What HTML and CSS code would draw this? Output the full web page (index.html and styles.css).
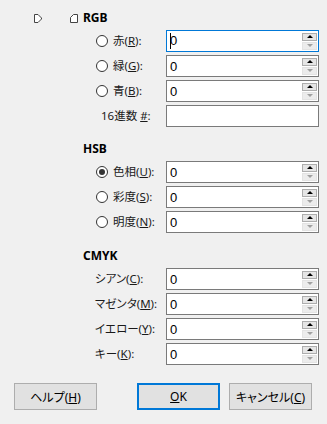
FILE: index.html
```html
<!DOCTYPE html>
<html lang="ja">
<head>
    <meta charset="UTF-8">
    <title>色の選択</title>
    <link rel="stylesheet" href="styles.css">
</head>
<body>
    <div class="dialog">
        <div class="top">
            <svg class="marker m1" width="8" height="9" viewBox="0 0 8 9"><path d="M0.5 0.5 H4 L7.5 4 V5 L4 8.5 H0.5 Z" fill="#fff" stroke="#444"/></svg>
            <svg class="marker m2" width="8" height="9" viewBox="0 0 8 9"><path d="M7.5 0.5 H3.5 L0.5 3.5 V8.5 H7.5 Z" fill="#fff" stroke="#444"/></svg>
            <h3 class="head">RGB</h3>
        </div>

        <div class="row">
            <label class="lbl radio"><span class="dot"></span>赤(<u>R</u>):</label>
            <div class="field focus"><span class="val"><span class="caret"></span>0</span><div class="spin"><span class="up"></span><span class="down"></span></div></div>
        </div>
        <div class="row">
            <label class="lbl radio"><span class="dot"></span>緑(<u>G</u>):</label>
            <div class="field"><span class="val">0</span><div class="spin"><span class="up"></span><span class="down"></span></div></div>
        </div>
        <div class="row">
            <label class="lbl radio"><span class="dot"></span>青(<u>B</u>):</label>
            <div class="field"><span class="val">0</span><div class="spin"><span class="up"></span><span class="down"></span></div></div>
        </div>
        <div class="row">
            <label class="lbl hex"><span>16進数 <u>#</u>:</span></label>
            <div class="field"><span class="val"></span></div>
        </div>

        <h3 class="head sec-hsb">HSB</h3>
        <div class="row">
            <label class="lbl radio"><span class="dot on"></span>色相(<u>U</u>):</label>
            <div class="field"><span class="val">0</span><div class="spin"><span class="up"></span><span class="down"></span></div></div>
        </div>
        <div class="row">
            <label class="lbl radio"><span class="dot"></span>彩度(<u>S</u>):</label>
            <div class="field"><span class="val">0</span><div class="spin"><span class="up"></span><span class="down"></span></div></div>
        </div>
        <div class="row">
            <label class="lbl radio"><span class="dot"></span>明度(<u>N</u>):</label>
            <div class="field"><span class="val">0</span><div class="spin"><span class="up"></span><span class="down"></span></div></div>
        </div>

        <h3 class="head sec-cmyk">CMYK</h3>
        <div class="row">
            <label class="lbl plain"><span>シアン(<u>C</u>):</span></label>
            <div class="field"><span class="val">0</span><div class="spin"><span class="up"></span><span class="down"></span></div></div>
        </div>
        <div class="row">
            <label class="lbl plain"><span>マゼンタ(<u>M</u>):</span></label>
            <div class="field"><span class="val">0</span><div class="spin"><span class="up"></span><span class="down"></span></div></div>
        </div>
        <div class="row">
            <label class="lbl plain"><span>イエロー(<u>Y</u>):</span></label>
            <div class="field"><span class="val">0</span><div class="spin"><span class="up"></span><span class="down"></span></div></div>
        </div>
        <div class="row">
            <label class="lbl plain"><span>キー(<u>K</u>):</span></label>
            <div class="field"><span class="val">0</span><div class="spin"><span class="up"></span><span class="down"></span></div></div>
        </div>

        <div class="buttons">
            <button class="btn">ヘルプ(<u>H</u>)</button>
            <span class="fill"></span>
            <button class="btn default"><u>O</u>K</button>
            <button class="btn">キャンセル(<u>C</u>)</button>
        </div>
    </div>
</body>
</html>
```

FILE: styles.css
```css
html, body {
    margin: 0;
    padding: 0;
    background: #f0f0f0;
}
.dialog {
    width: 327px;
    height: 424px;
    font-family: "Noto Sans", "Noto Sans CJK JP", sans-serif;
    font-feature-settings: "palt";
    font-size: 12px;
    color: #1a1a1a;
    padding-top: 10px;
    box-sizing: border-box;
}
.top {
    display: flex;
    align-items: center;
    height: 16px;
    margin-bottom: 4px;
}
.marker {
    display: block;
}
.m1 {
    margin-left: 34px;
}
.m2 {
    margin-left: 28px;
}
.head {
    margin: 0;
    font-size: 12px;
    font-weight: bold;
    line-height: 16px;
    height: 16px;
    color: #000;
}
.top .head {
    margin-left: 5px;
}
.sec-hsb, .sec-cmyk {
    padding-left: 83px;
}
.sec-hsb {
    margin-top: 14px;
    margin-bottom: 4px;
}
.sec-cmyk {
    margin-top: 15px;
    margin-bottom: 4px;
}
.row {
    display: flex;
    align-items: center;
    height: 22px;
    margin-bottom: 3px;
}
.lbl {
    flex: 1;
    display: flex;
    align-items: center;
    white-space: pre;
    line-height: 16px;
    font-size: 11.5px;
}
.radio {
    padding-left: 96px;
}
.hex {
    padding-left: 101px;
}
.plain {
    padding-left: 95px;
}
.dot {
    width: 12px;
    height: 12px;
    box-sizing: border-box;
    border: 1px solid #333;
    border-radius: 50%;
    background: #fff;
    margin-right: 5px;
    display: flex;
    align-items: center;
    justify-content: center;
}
.dot.on::after {
    content: "";
    width: 6px;
    height: 6px;
    border-radius: 50%;
    background: #333;
}
.field {
    width: 153px;
    height: 22px;
    margin-right: 8px;
    box-sizing: border-box;
    border: 1px solid #7a7a7a;
    background: #fff;
    display: flex;
    align-items: center;
}
.field.focus {
    border-color: #0078d7;
}
.val {
    flex: 1;
    padding-left: 3px;
    font-family: "Liberation Sans", Arial, sans-serif;
    font-size: 13px;
    color: #000;
}
.caret {
    display: inline-block;
    width: 1px;
    height: 16px;
    background: #000;
    vertical-align: -4px;
    margin-right: -1px;
}
.spin {
    width: 15px;
    margin-right: 1px;
    display: flex;
    flex-direction: column;
    gap: 1px;
}
.spin span {
    height: 8px;
    box-sizing: border-box;
    display: flex;
    align-items: center;
    justify-content: center;
}
.spin .up {
    border: 1px solid #adadad;
    background: #e5e5e5;
}
.spin .down {
    border: 1px solid #e3e3e3;
    background: #ececec;
}
.spin .up::after {
    content: "";
    border-left: 3px solid transparent;
    border-right: 3px solid transparent;
    border-bottom: 3px solid #000;
}
.spin .down::after {
    content: "";
    border-left: 3px solid transparent;
    border-right: 3px solid transparent;
    border-top: 3px solid #a0a0a0;
}
.buttons {
    display: flex;
    margin-top: 18px;
    padding-left: 14px;
    gap: 9px;
}
.fill {
    width: 22px;
}
.btn {
    width: 83px;
    height: 27px;
    box-sizing: border-box;
    border: 1px solid #adadad;
    background: #e1e1e1;
    font-family: "Noto Sans", "Noto Sans CJK JP", sans-serif;
    font-feature-settings: "palt";
    font-size: 12px;
    color: #000;
    padding: 0;
}
.btn.default {
    border: 2px solid #0078d7;
}
```
